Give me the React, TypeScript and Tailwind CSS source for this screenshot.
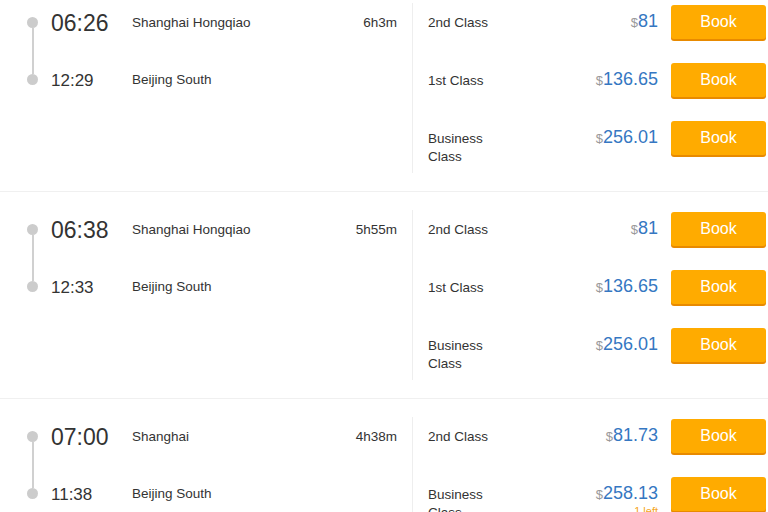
import React from "react";

type Fare = { cls: string; price: string; left?: string };
type Train = {
  dep: string;
  arr: string;
  from: string;
  to: string;
  duration: string;
  fares: Fare[];
};

const trains: Train[] = [
  {
    dep: "06:26",
    arr: "12:29",
    from: "Shanghai Hongqiao",
    to: "Beijing South",
    duration: "6h3m",
    fares: [
      { cls: "2nd Class", price: "81" },
      { cls: "1st Class", price: "136.65" },
      { cls: "Business Class", price: "256.01" },
    ],
  },
  {
    dep: "06:38",
    arr: "12:33",
    from: "Shanghai Hongqiao",
    to: "Beijing South",
    duration: "5h55m",
    fares: [
      { cls: "2nd Class", price: "81" },
      { cls: "1st Class", price: "136.65" },
      { cls: "Business Class", price: "256.01" },
    ],
  },
  {
    dep: "07:00",
    arr: "11:38",
    from: "Shanghai",
    to: "Beijing South",
    duration: "4h38m",
    fares: [
      { cls: "2nd Class", price: "81.73" },
      { cls: "Business Class", price: "258.13", left: "1 left" },
    ],
  },
];

function FareRow({ fare }: { fare: Fare }) {
  return (
    <div className="flex items-start h-[34px]">
      <div className="w-[80px] pt-[9px] text-[13.5px] leading-[18px] text-[#333]">{fare.cls}</div>
      <div className="flex-1 flex flex-col items-end pt-[5px]">
        <div className="leading-[22px] text-[#3577c2]">
          <span className="text-[13px] text-[#999]">$</span>
          <span className="text-[18px]">{fare.price}</span>
        </div>
        {fare.left && <div className="text-[11px] leading-[11px] text-[#f5a623]">{fare.left}</div>}
      </div>
      <button className="ml-[13px] w-[95px] h-[34px] rounded-[3px] bg-[#ffab00] shadow-[0_2px_0_#e88a00] text-white text-[16px]">
        Book
      </button>
    </div>
  );
}

function TrainRow({ t }: { t: Train }) {
  return (
    <div className="flex pt-[18px] pb-[18px] border-b border-[#f0f0f0]">
      <div className="w-[412px] flex pl-[27px]">
        <div className="w-[11px] flex flex-col items-center pt-[14px]">
          <div className="w-[11px] h-[11px] rounded-full bg-[#cccccc]" />
          <div className="w-[2px] h-[46px] bg-[#d0d0d0]" />
          <div className="w-[11px] h-[11px] rounded-full bg-[#cccccc]" />
        </div>
        <div className="flex-1 ml-[13px] pr-[15px] flex flex-col">
          <div className="h-[40px] flex items-center">
            <div className="w-[81px] text-[23px] pt-[1px] text-[#333]">{t.dep}</div>
            <div className="flex-1 text-[13.5px] text-[#333]">{t.from}</div>
            <div className="text-[13.5px] text-[#333]">{t.duration}</div>
          </div>
          <div className="h-[40px] mt-[17px] flex items-center pt-[1px]">
            <div className="w-[81px] text-[17px] text-[#333]">{t.arr}</div>
            <div className="flex-1 text-[13.5px] text-[#333]">{t.to}</div>
          </div>
        </div>
      </div>
      <div className="flex-1 border-l border-[#eeeeee] pl-[15px] pr-[2px] pt-[2px] pb-[18px] flex flex-col gap-[24px]">
        {t.fares.map((f, i) => (
          <FareRow key={i} fare={f} />
        ))}
      </div>
    </div>
  );
}

export default function App() {
  return (
    <div
      className="w-[768px] h-[512px] overflow-hidden bg-white"
      style={{ fontFamily: '"Liberation Sans", Arial, sans-serif' }}
    >
      <div className="-mt-[15px]">
        {trains.map((t, i) => (
          <TrainRow key={i} t={t} />
        ))}
      </div>
    </div>
  );
}
